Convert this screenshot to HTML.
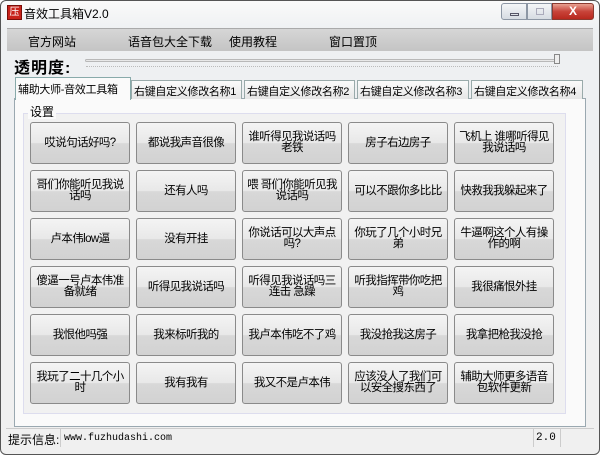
<!DOCTYPE html><html><head><meta charset="utf-8"><style>
*{margin:0;padding:0;box-sizing:border-box}
body{width:600px;height:455px;background:#fff;font-family:"Liberation Sans","Noto Sans CJK SC",sans-serif;font-size:12px;color:#000;position:relative;overflow:hidden}
.a{position:absolute}
.win{left:0;top:0;width:600px;height:455px;border:1px solid #555;border-radius:6px;background:linear-gradient(#fafafa,#eef0f2 30px,#f0f0f0)}
.btn{position:absolute;width:100px;height:42px;border:1px solid #8a8a8a;border-radius:3px;background:linear-gradient(#f4f4f4,#e8e8e8 50%,#d8d8d8 51%,#d2d2d2);display:flex;align-items:center;justify-content:center;text-align:center;line-height:11px;font-size:11.5px;padding:0 2px;letter-spacing:-0.6px}
.tab{position:absolute;top:80px;height:19px;border:1px solid #9aa;border-bottom:none;background:linear-gradient(#fbfbfb,#e6e6e6);font-size:11px;padding:2px 2px;white-space:nowrap;letter-spacing:-0.3px;overflow:hidden}
</style></head><body>
<div class="a win"></div>
<div class="a" style="left:7px;top:5px;width:15px;height:15px;background:#c8221a;border:1px solid #7a0e08;color:#fff;font-size:10px;line-height:13px;text-align:center">压</div>
<div class="a" style="left:24px;top:5px;font-size:12px">音效工具箱V2.0</div>
<div class="a" style="left:501px;top:3px;width:26px;height:17px;border:1px solid #8c96a4;border-radius:3px 0 0 3px;background:linear-gradient(#f4f6f8,#d6dbe2)"><div class="a" style="left:8px;top:9px;width:9px;height:3px;border:1px solid #556"></div></div>
<div class="a" style="left:527px;top:3px;width:25px;height:17px;border:1px solid #8c96a4;background:linear-gradient(#f4f6f8,#d6dbe2)"><div class="a" style="left:8px;top:4px;width:8px;height:7px;border:1px solid #aab"></div></div>
<div class="a" style="left:552px;top:3px;width:42px;height:17px;border:1px solid #8a3a30;border-radius:0 3px 3px 0;background:linear-gradient(#e8a090,#c8443a 50%,#b8281e);color:#fff;font-weight:bold;text-align:center;line-height:15px;font-size:12px">X</div>
<div class="a" style="left:7px;top:28px;width:586px;height:23px;background:linear-gradient(#d6d6d6,#c4c4c4);border-top:1px solid #aaa"></div>
<div class="a" style="left:28px;top:33px">官方网站</div>
<div class="a" style="left:128px;top:33px">语音包大全下载</div>
<div class="a" style="left:229px;top:33px">使用教程</div>
<div class="a" style="left:329px;top:33px">窗口置顶</div>
<div class="a" style="left:14px;top:54px;font-size:16px;font-weight:bold;letter-spacing:1px">透明度:</div>
<div class="a" style="left:85px;top:59px;width:474px;height:3px;border:1px solid #b8b8b8;border-radius:2px;background:#e8e8e8"></div>
<div class="a" style="left:86px;top:66px;width:472px;height:1px;border-top:1px dotted #bbb"></div>
<div class="a" style="left:554px;top:54px;width:6px;height:10px;border:1px solid #888;background:#eee"></div>
<div class="a" style="left:14px;top:98px;width:572px;height:329px;border:1px solid #9aa8b0;background:#fafafa"></div>
<div class="tab" style="left:131px;width:111px">右键自定义修改名称1</div>
<div class="tab" style="left:244px;width:111px">右键自定义修改名称2</div>
<div class="tab" style="left:357px;width:112px">右键自定义修改名称3</div>
<div class="tab" style="left:471px;width:112px">右键自定义修改名称4</div>
<div class="tab" style="left:15px;top:77px;height:23px;width:116px;background:#fafafa;border-color:#8aa;padding-top:3px">辅助大师-音效工具箱</div>
<div class="a" style="left:23px;top:113px;width:543px;height:301px;border:1px solid #dde;background:#f1f1f1"></div>
<div class="a" style="left:28px;top:105px;background:#fafafa;padding:0 2px;line-height:14px">设置</div>
<div class="btn" style="left:30px;top:122px">哎说句话好吗?</div>
<div class="btn" style="left:136px;top:122px">都说我声音很像</div>
<div class="btn" style="left:242px;top:122px">谁听得见我说话吗老铁</div>
<div class="btn" style="left:348px;top:122px">房子右边房子</div>
<div class="btn" style="left:454px;top:122px">飞机上 谁哪听得见我说话吗</div>
<div class="btn" style="left:30px;top:170px">哥们你能听见我说话吗</div>
<div class="btn" style="left:136px;top:170px">还有人吗</div>
<div class="btn" style="left:242px;top:170px">喂 哥们你能听见我说话吗</div>
<div class="btn" style="left:348px;top:170px">可以不跟你多比比</div>
<div class="btn" style="left:454px;top:170px">快救我我躲起来了</div>
<div class="btn" style="left:30px;top:218px">卢本伟low逼</div>
<div class="btn" style="left:136px;top:218px">没有开挂</div>
<div class="btn" style="left:242px;top:218px">你说话可以大声点吗?</div>
<div class="btn" style="left:348px;top:218px">你玩了几个小时兄弟</div>
<div class="btn" style="left:454px;top:218px">牛逼啊这个人有操作的啊</div>
<div class="btn" style="left:30px;top:266px">傻逼一号卢本伟准备就绪</div>
<div class="btn" style="left:136px;top:266px">听得见我说话吗</div>
<div class="btn" style="left:242px;top:266px">听得见我说话吗三连击 急躁</div>
<div class="btn" style="left:348px;top:266px">听我指挥带你吃把鸡</div>
<div class="btn" style="left:454px;top:266px">我很痛恨外挂</div>
<div class="btn" style="left:30px;top:314px">我恨他吗强</div>
<div class="btn" style="left:136px;top:314px">我来标听我的</div>
<div class="btn" style="left:242px;top:314px">我卢本伟吃不了鸡</div>
<div class="btn" style="left:348px;top:314px">我没抢我这房子</div>
<div class="btn" style="left:454px;top:314px">我拿把枪我没抢</div>
<div class="btn" style="left:30px;top:362px">我玩了二十几个小时</div>
<div class="btn" style="left:136px;top:362px">我有我有</div>
<div class="btn" style="left:242px;top:362px">我又不是卢本伟</div>
<div class="btn" style="left:348px;top:362px">应该没人了我们可以安全搜东西了</div>
<div class="btn" style="left:454px;top:362px">辅助大师更多语音包软件更新</div>
<div class="a" style="left:6px;top:428px;width:588px;height:20px;background:#f0f0f0;border-top:1px solid #ccc"></div>
<div class="a" style="left:8px;top:431px">提示信息:</div>
<div class="a" style="left:60px;top:429px;width:474px;height:18px;border-left:1px solid #ccc;border-right:1px solid #ccc"></div>
<div class="a" style="left:64px;top:433px;font-family:'Liberation Mono',monospace;font-size:10px">www.fuzhudashi.com</div>
<div class="a" style="left:536px;top:432px;font-family:'Liberation Mono',monospace;font-size:11px">2.0</div>
<div class="a" style="left:560px;top:429px;width:1px;height:18px;background:#ccc"></div>
</body></html>
